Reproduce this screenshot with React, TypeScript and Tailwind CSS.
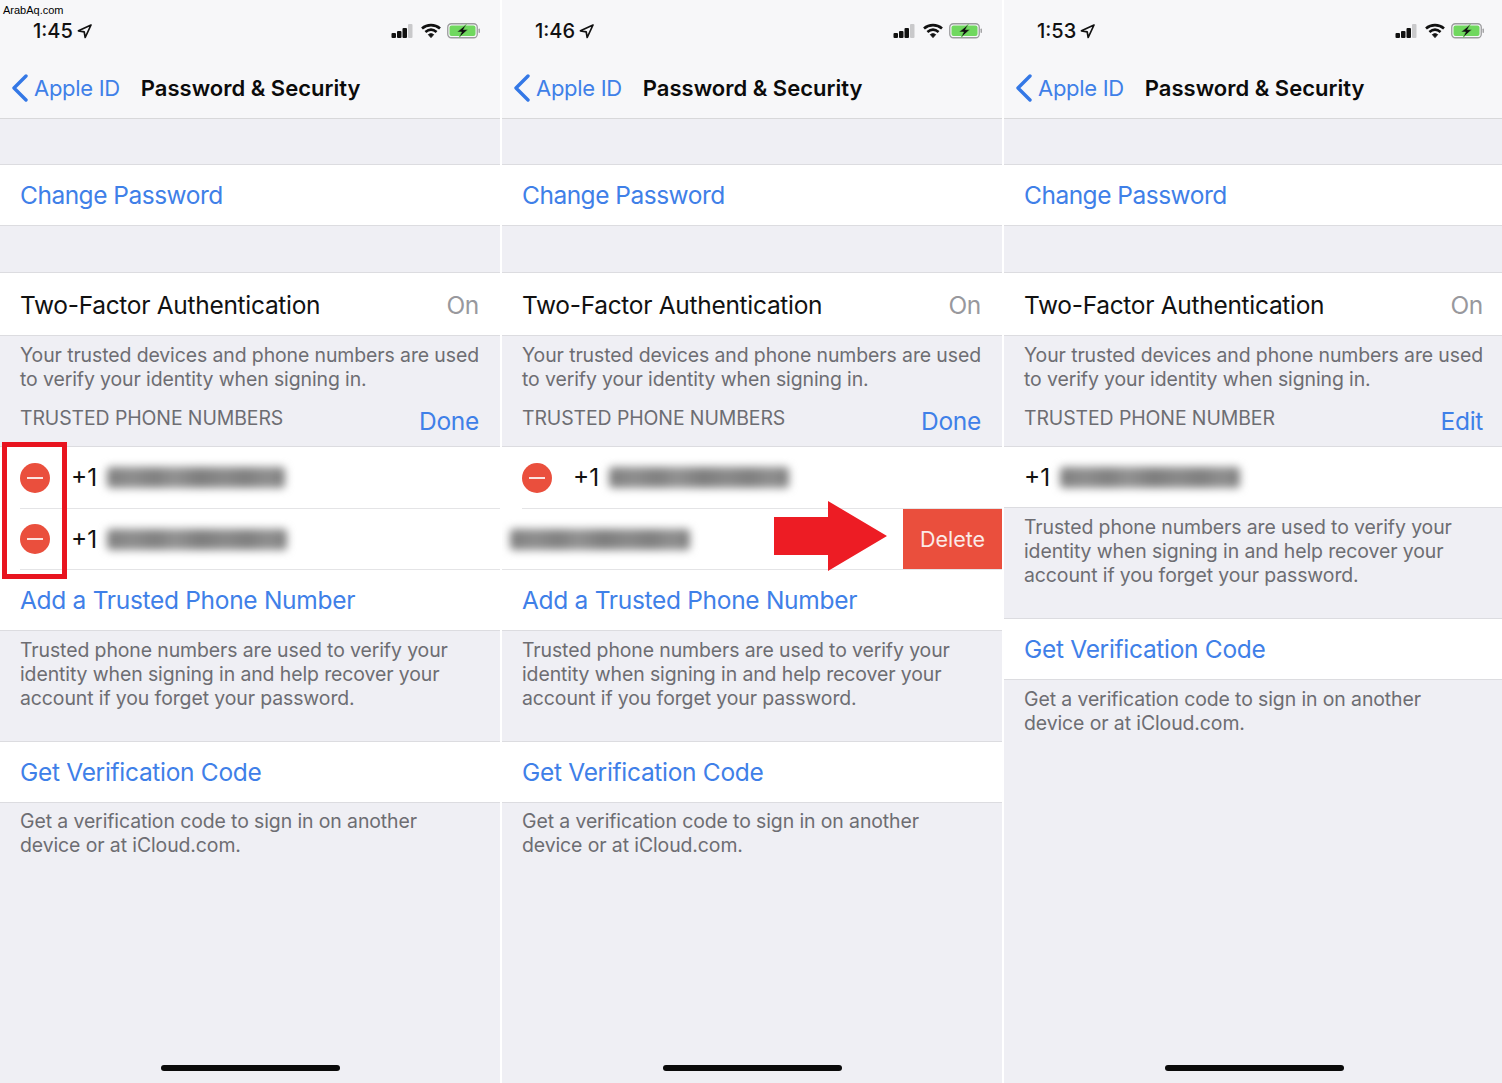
import type { ReactNode } from "react";

const FONT = "font-['Inter','Liberation_Sans',sans-serif]";

function StatusIcons() {
  return (
    <div className="flex items-center gap-[6px]">
      {/* signal */}
      <svg width="24" height="16" viewBox="0 0 24 16">
        <rect x="0.5" y="10" width="4.5" height="5" rx="1" fill="#111" />
        <rect x="6" y="8" width="4.5" height="7" rx="1" fill="#111" />
        <rect x="11.5" y="5" width="4.5" height="10" rx="1" fill="#111" />
        <rect x="17" y="1" width="4.5" height="14" rx="1" fill="#c9c9cb" />
      </svg>
      {/* wifi */}
      <svg width="20" height="16" viewBox="0 0 20 16" fill="none">
        <path d="M1 5.5C6 1 14 1 19 5.5" stroke="#111" strokeWidth="2.6" />
        <path d="M4.4 9C8 6 12 6 15.6 9" stroke="#111" strokeWidth="2.6" />
        <path d="M7.4 11.6L10 14.6L12.6 11.6C11 10.4 9 10.4 7.4 11.6Z" fill="#111" stroke="#111" />
      </svg>
      {/* battery */}
      <svg width="34" height="16" viewBox="0 0 34 16">
        <rect x="0.75" y="0.75" width="29.5" height="14" rx="3.5" fill="none" stroke="#9c9c9e" strokeWidth="1.3" />
        <rect x="2.5" y="2.5" width="26" height="10.5" rx="2" fill="#70d85f" />
        <rect x="31.5" y="5.5" width="1.5" height="4.5" rx="0.7" fill="#a5a5a7" />
        <path d="M19.5 1.2L10 9H14.5L12 14.6L21 6.6H16.5Z" fill="#111" stroke="#70d85f" strokeWidth="0.6" />
      </svg>
    </div>
  );
}

function Header({ time }: { time: string }) {
  return (
    <div className="h-[119px] shrink-0 bg-[#f7f7f9] border-b border-[#d8d8da] flex flex-col">
      <div className="h-[60px] flex items-center justify-between pl-[33px] pr-[19px] pt-[2px]">
        <div className="flex items-center gap-[4px]">
          <span className="text-[20px] leading-[26px] font-medium text-[#111]">{time}</span>
          <svg width="15" height="15" viewBox="0 0 15 15" fill="none">
            <path d="M14 1L1.5 6.8L7.2 7.8L8.2 13.5Z" stroke="#111" strokeWidth="1.7" strokeLinejoin="round" />
          </svg>
        </div>
        <StatusIcons />
      </div>
      <div className="flex items-center pl-[11px] h-[56px]">
        <svg width="18" height="28" viewBox="0 0 18 28" fill="none">
          <path d="M15 2L3 14L15 26" stroke="#3478e6" strokeWidth="3.4" strokeLinecap="round" strokeLinejoin="round" />
        </svg>
        <span className="ml-[5px] text-[22px] leading-none text-[#3f80e8] tracking-[-0.3px]">Apple ID</span>
        <span className="ml-[21px] text-[22px] leading-none font-semibold text-[#0b0b0b]">
          Password &amp; Security
        </span>
      </div>
    </div>
  );
}

function Row({ children, h = 62, className = "" }: { children: ReactNode; h?: number; className?: string }) {
  return (
    <div
      className={`bg-white border-y border-[#dcdce0] flex items-center justify-between pl-[20px] pr-[21px] text-[24.5px] tracking-[-0.3px] ${className}`}
      style={{ height: h }}
    >
      {children}
    </div>
  );
}

function Footnote({ lines, className = "" }: { lines: string[]; className?: string }) {
  return (
    <div className={`pl-[20px] text-[19.45px] leading-[24px] text-[#6d6d72] tracking-[-0.1px] ${className}`}>
      {lines.map((l) => (
        <div key={l} className="whitespace-nowrap">
          {l}
        </div>
      ))}
    </div>
  );
}

function Minus() {
  return (
    <span className="w-[30px] h-[30px] rounded-full bg-[#ea4f3d] flex items-center justify-center shrink-0">
      <span className="w-[16px] h-[2px] bg-[#fbe3df]" />
    </span>
  );
}

// redacted phone number, smeared in the screenshot
function Blur({ w }: { w: number }) {
  return (
    <span
      className="block h-[21px] blur-[4.5px] rounded-sm bg-[linear-gradient(90deg,#7f7f7f_0%,#8e8e8e_14%,#808080_27%,#929292_38%,#7d7d7d_52%,#8a8a8a_66%,#7f7f7f_78%,#8f8f8f_90%,#7f7f7f_100%)]"
      style={{ width: w }}
    />
  );
}

function PhoneRow({ minus, w, h = 60 }: { minus?: boolean; w: number; h?: number }) {
  return (
    <div className="flex items-center pl-[20px] text-[24.5px] text-[#111]" style={{ height: h }}>
      {minus && <Minus />}
      <span className={minus ? "ml-[21px]" : ""}>+1</span>
      <span className="ml-[10px]">
        <Blur w={w} />
      </span>
    </div>
  );
}

function AddRow() {
  return (
    <div className="h-[61px] flex items-center pl-[20px] pr-[21px] text-[24.5px] tracking-[-0.3px] text-[#3f80e8] border-b border-[#dcdce0]">
      Add a Trusted Phone Number
    </div>
  );
}

const TRUSTED = [
  "Trusted phone numbers are used to verify your",
  "identity when signing in and help recover your",
  "account if you forget your password.",
];
const CODE = ["Get a verification code to sign in on another", "device or at iCloud.com."];

function Top({ label, action }: { label: string; action: string }) {
  return (
    <>
      <div className="h-[45px] shrink-0" />
      <Row className="pt-[1px]">
        <span className="text-[#3f80e8] tracking-[-0.5px]">Change Password</span>
      </Row>
      <div className="h-[46px] shrink-0" />
      <Row h={64} className="pt-[3px]">
        <span className="text-[#111]">Two-Factor Authentication</span>
        <span className="text-[#98989d]">On</span>
      </Row>
      <Footnote className="pt-[7px]" lines={["Your trusted devices and phone numbers are used", "to verify your identity when signing in."]} />
      <div className="h-[55px] shrink-0 flex justify-between pl-[20px] pr-[21px] pt-[15px]">
        <span className="text-[19.45px] leading-[24px] text-[#6d6d72] tracking-[-0.1px]">{label}</span>
        <span className="text-[24.5px] leading-[30px] text-[#3f80e8] tracking-[-0.3px]">{action}</span>
      </div>
    </>
  );
}

function Bottom({ codeClass = "pt-[6px]" }: { codeClass?: string }) {
  return (
    <>
      <Footnote lines={TRUSTED} className="pt-[7px]" />
      <div className="h-[31px] shrink-0" />
      <Row>
        <span className="text-[#3f80e8]">Get Verification Code</span>
      </Row>
      <Footnote lines={CODE} className={codeClass} />
    </>
  );
}

function Panel({ time, children }: { time: string; children: ReactNode }) {
  return (
    <div className={`w-[500px] shrink-0 h-[1083px] bg-[#efeff4] flex flex-col overflow-hidden ${FONT}`}>
      <Header time={time} />
      {children}
      <div className="mt-auto mb-[12px] mx-auto w-[179px] h-[6px] rounded-full bg-[#0a0a0a]" />
    </div>
  );
}

export default function App() {
  return (
    <div className="relative w-[1502px] h-[1083px] bg-white flex gap-[2px]">
      <span className="absolute left-[3px] top-[4px] z-10 text-[11px] leading-[13px] text-black font-['Liberation_Sans',sans-serif]">
        ArabAq.com
      </span>

      <Panel time="1:45">
        <Top label="TRUSTED PHONE NUMBERS" action="Done" />
        <div className="bg-white border-t border-[#dcdce0]">
          <PhoneRow minus w={178} h={61} />
          <div className="ml-[20px] h-[1px] bg-[#e4e4e6]" />
          <PhoneRow minus w={180} />
          <div className="ml-[20px] h-[1px] bg-[#e4e4e6]" />
          <AddRow />
        </div>
        <Bottom />
      </Panel>

      <Panel time="1:46">
        <Top label="TRUSTED PHONE NUMBERS" action="Done" />
        <div className="bg-white border-t border-[#dcdce0]">
          <PhoneRow minus w={180} h={61} />
          <div className="ml-[20px] h-[1px] bg-[#e4e4e6]" />
          <div className="h-[60px] flex items-center justify-between pl-[8px]">
            <Blur w={180} />
            <span className="w-[99px] h-full bg-[#ea4f3d] text-[#fbeae7] text-[21.5px] flex items-center justify-center">
              Delete
            </span>
          </div>
          <div className="h-[1px] bg-[#e4e4e6]" />
          <AddRow />
        </div>
        <Bottom />
      </Panel>

      <Panel time="1:53">
        <Top label="TRUSTED PHONE NUMBER" action="Edit" />
        <div className="bg-white border-y border-[#dcdce0]">
          <PhoneRow w={180} />
        </div>
        <Bottom codeClass="pt-[7px]" />
      </Panel>

      {/* annotations drawn on top of the screenshot */}
      <div className="absolute left-[2px] top-[442px] w-[65px] h-[137px] border-[5px] border-[#e8141f]" />
      <svg className="absolute left-[773px] top-[500px]" width="116" height="72" viewBox="0 0 116 72">
        <path d="M1 17H55V1L114 36L55 71V55H1Z" fill="#ed1c24" />
      </svg>
    </div>
  );
}
